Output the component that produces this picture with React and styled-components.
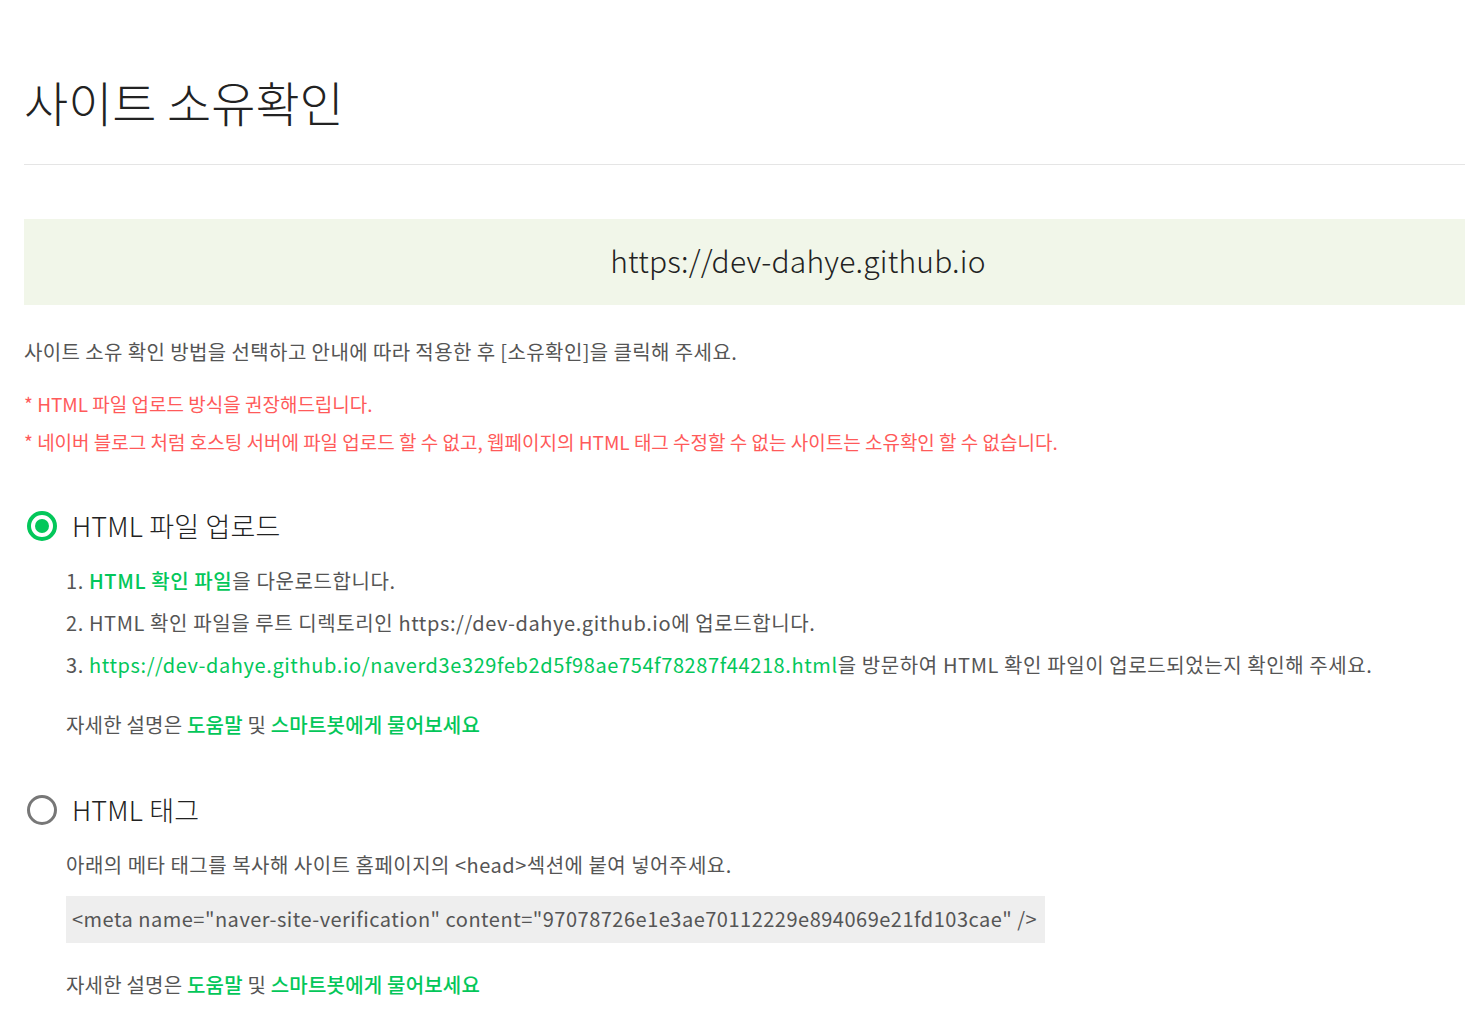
import styled, { createGlobalStyle } from "styled-components";

const GlobalStyle = createGlobalStyle`
  html, body {
    margin: 0;
    padding: 0;
    background: #fff;
    overflow: hidden;
  }
  body {
    font-family: "Noto Sans CJK KR", "Noto Sans", sans-serif;
    color: #333;
  }
`;

const Page = styled.div`
  width: 1548px;
  padding: 68px 0 40px 24px;
`;

const Title = styled.h1`
  margin: 0;
  font-size: 48px;
  font-weight: 300;
  color: #222;
  line-height: 66px;
  padding-bottom: 30px;
  border-bottom: 1px solid #e5e5e5;
`;

const SiteBox = styled.div`
  margin-top: 54px;
  height: 86px;
  box-sizing: border-box;
  padding-bottom: 5px;
  background-color: #f1f6e9;
  display: flex;
  align-items: center;
  justify-content: center;
  font-size: 30px;
  font-weight: 300;
  color: #222;
  letter-spacing: 0.2px;
`;

const Guide = styled.p`
  margin: 32px 0 0;
  font-size: 20px;
  color: #555;
  letter-spacing: 0.4px;
  line-height: 30px;
`;

const Notice = styled.p`
  margin: ${({ first }) => (first ? "22px" : "8px")} 0 0;
  font-size: 19px;
  color: #ff5a5a;
  line-height: 30px;
`;

const Method = styled.section`
  margin-top: ${({ first }) => (first ? 49 : 50)}px;
`;

const MethodHead = styled.label`
  display: flex;
  align-items: center;
  gap: 15px;
  font-size: 27px;
  font-weight: 300;
  color: #222;
  letter-spacing: 0.2px;
  line-height: 40px;
  padding-left: 3px;
`;

const Radio = styled.span`
  width: 30px;
  height: 30px;
  box-sizing: border-box;
  border-radius: 50%;
  border: ${({ checked }) => (checked ? "4px solid #03c75a" : "3px solid #777")};
  display: flex;
  align-items: center;
  justify-content: center;

  &::after {
    content: "";
    display: ${({ checked }) => (checked ? "block" : "none")};
    width: 14px;
    height: 14px;
    border-radius: 50%;
    background: #03c75a;
  }
`;

const MethodBody = styled.div`
  padding-left: 42px;
  margin-top: ${({ gap }) => gap || 18}px;
`;

const Steps = styled.ol`
  margin: 0;
  padding: 0;
  list-style: none;
`;

const Step = styled.li`
  font-size: 20px;
  color: #555;
  letter-spacing: 0.6px;
  line-height: 42px;
`;

const Green = styled.a`
  color: #03c75a;
  text-decoration: none;
  font-weight: ${({ bold }) => (bold ? 500 : 400)};
`;

const Help = styled.p`
  margin: ${({ top }) => top}px 0 0;
  font-size: 20px;
  color: #555;
  letter-spacing: 0.2px;
  line-height: 30px;
`;

const Desc = styled.p`
  margin: 0;
  font-size: 20px;
  color: #555;
  letter-spacing: 0.5px;
  line-height: 30px;
`;

const CodeBox = styled.div`
  margin-top: 16px;
  width: 979px;
  height: 47px;
  box-sizing: border-box;
  background: #eeeeee;
  display: flex;
  align-items: center;
  padding: 0 0 3px 6px;
  font-size: 20px;
  color: #555;
  letter-spacing: 0.5px;
  white-space: nowrap;
`;

const site = "https://dev-dahye.github.io";
const fileName = "naverd3e329feb2d5f98ae754f78287f44218.html";

function HelpLine({ top }) {
  return (
    <Help top={top}>
      자세한 설명은 <Green bold>도움말</Green> 및{" "}
      <Green bold>스마트봇에게 물어보세요</Green>
    </Help>
  );
}

export default function App() {
  return (
    <>
      <GlobalStyle />
      <Page>
        <Title>사이트 소유확인</Title>
        <SiteBox>{site}</SiteBox>
        <Guide>
          사이트 소유 확인 방법을 선택하고 안내에 따라 적용한 후 [소유확인]을
          클릭해 주세요.
        </Guide>
        <Notice first>* HTML 파일 업로드 방식을 권장해드립니다.</Notice>
        <Notice>
          * 네이버 블로그 처럼 호스팅 서버에 파일 업로드 할 수 없고, 웹페이지의
          HTML 태그 수정할 수 없는 사이트는 소유확인 할 수 없습니다.
        </Notice>

        <Method first>
          <MethodHead>
            <Radio checked />
            HTML 파일 업로드
          </MethodHead>
          <MethodBody gap={14}>
            <Steps>
              <Step>
                1. <Green bold>HTML 확인 파일</Green>을 다운로드합니다.
              </Step>
              <Step>
                2. HTML 확인 파일을 루트 디렉토리인 {site}에 업로드합니다.
              </Step>
              <Step>
                3. <Green>{`${site}/${fileName}`}</Green>을 방문하여 HTML 확인
                파일이 업로드되었는지 확인해 주세요.
              </Step>
            </Steps>
            <HelpLine top={24} />
          </MethodBody>
        </Method>

        <Method>
          <MethodHead>
            <Radio />
            HTML 태그
          </MethodHead>
          <MethodBody gap={20}>
            <Desc>
              아래의 메타 태그를 복사해 사이트 홈페이지의 &lt;head&gt;섹션에 붙여
              넣어주세요.
            </Desc>
            <CodeBox>
              {
                '<meta name="naver-site-verification" content="97078726e1e3ae70112229e894069e21fd103cae" />'
              }
            </CodeBox>
            <HelpLine top={27} />
          </MethodBody>
        </Method>
      </Page>
    </>
  );
}
